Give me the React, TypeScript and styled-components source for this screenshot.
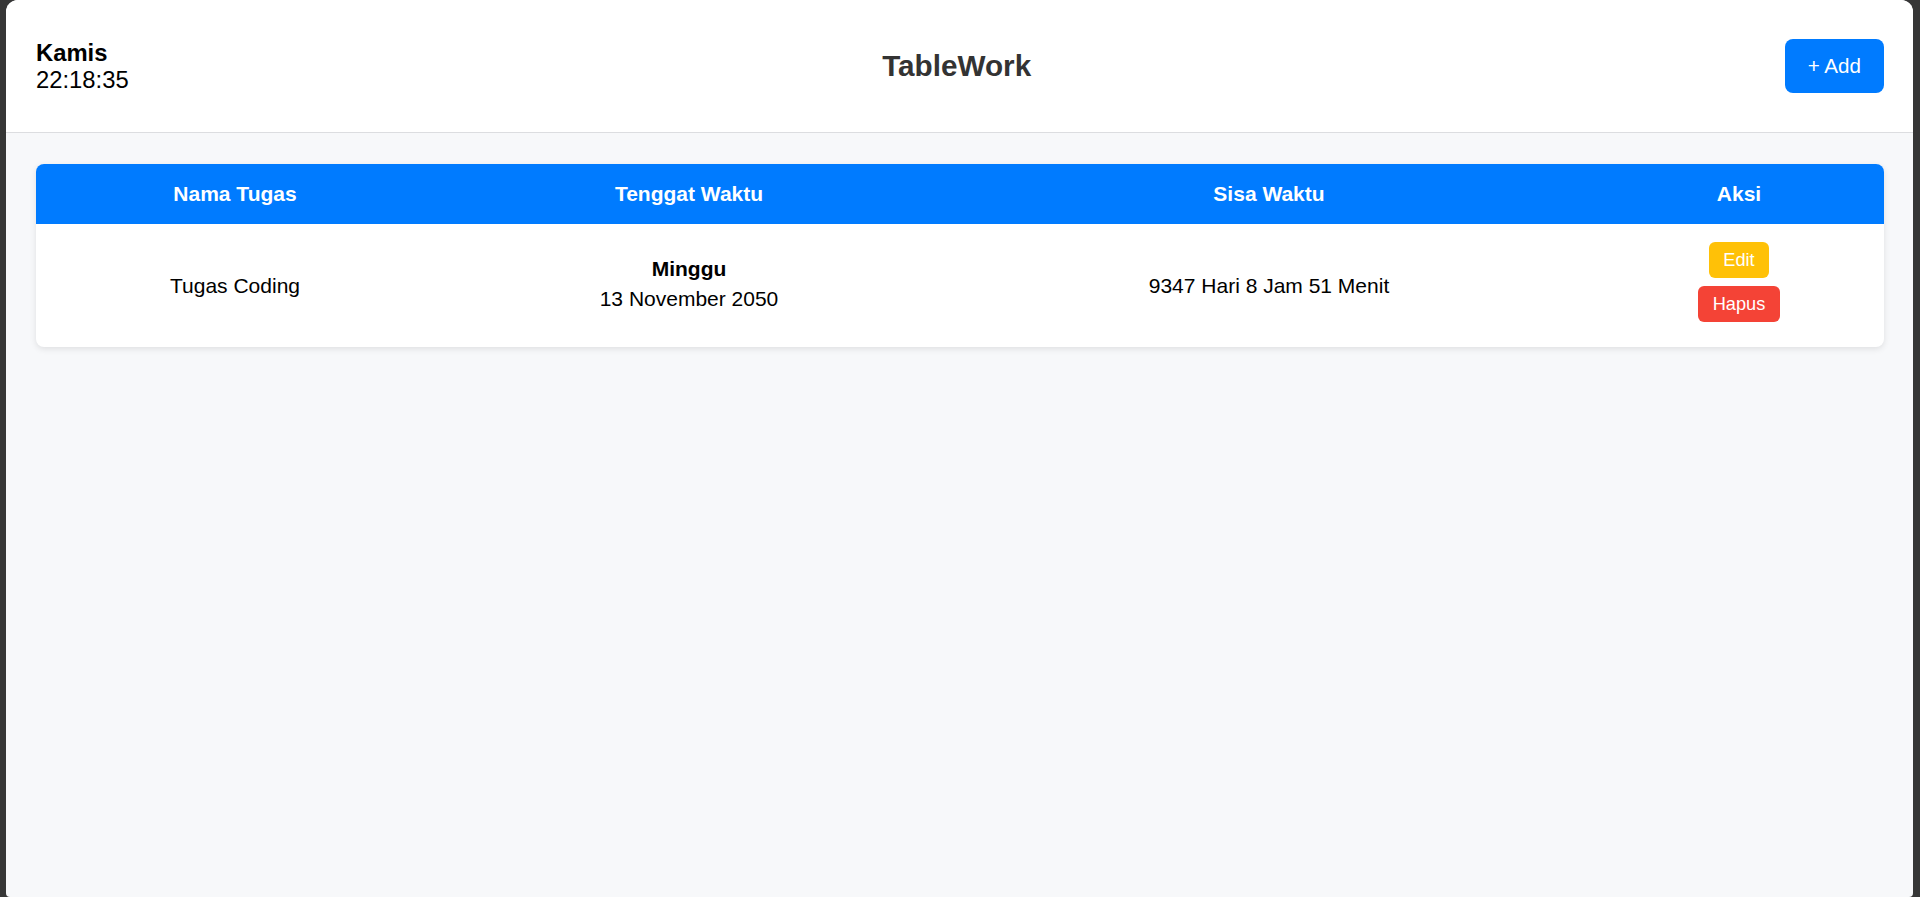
import React from "react";
import styled, { createGlobalStyle } from "styled-components";

const GlobalStyle = createGlobalStyle`
  html, body {
    margin: 0;
    padding: 0;
    background: #363636;
  }
  body {
    font-family: "Liberation Sans", Arial, sans-serif;
  }
  * { box-sizing: border-box; }
`;

const Window = styled.div`
  margin: 0 7px 0 6px;
  height: 897px;
  border-radius: 12px 12px 4px 4px;
  overflow: hidden;
  background: #f7f8fa;
  display: flex;
  flex-direction: column;
`;

const Header = styled.header`
  height: 133px;
  background: #ffffff;
  border-bottom: 1px solid #dcdde0;
  display: flex;
  align-items: center;
  justify-content: space-between;
  padding: 0 29px 0 30px;
`;

const Clock = styled.div`
  font-size: 23.8px;
  line-height: 27.5px;
  color: #000;
`;

const Day = styled.div`
  font-weight: bold;
`;

const Title = styled.h1`
  margin: 0;
  font-size: 29.7px;
  font-weight: bold;
  color: #333333;
`;

const AddButton = styled.button`
  height: 54px;
  padding: 0 23px;
  border: none;
  border-radius: 8px;
  background: #007bff;
  color: #ffffff;
  font-family: inherit;
  font-size: 20.6px;
  cursor: pointer;
`;

const Main = styled.main`
  flex: 1;
  padding: 31px 29px 31px 30px;
`;

const Card = styled.div`
  background: #ffffff;
  border-radius: 8px;
  overflow: hidden;
  box-shadow: 0 2px 6px rgba(0, 0, 0, 0.1);
`;

const Table = styled.table`
  width: 100%;
  border-collapse: collapse;
  table-layout: fixed;
`;

const HeadCell = styled.th`
  height: 60px;
  padding: 0;
  background: #007bff;
  color: #ffffff;
  font-size: 21px;
  font-weight: bold;
  text-align: center;
  vertical-align: middle;
`;

const Cell = styled.td`
  height: 123px;
  padding: 0;
  font-size: 21px;
  color: #000;
  text-align: center;
  vertical-align: middle;
`;

const DateBlock = styled.div`
  line-height: 29.3px;
  margin-top: -4px;
`;

const DayName = styled.div`
  font-weight: bold;
`;

const Actions = styled.div`
  display: flex;
  flex-direction: column;
  align-items: center;
  gap: 8px;
  margin-top: -7px;
`;

const ActionButton = styled.button<{ $bg: string }>`
  height: 36px;
  padding: 0 14.5px;
  border: none;
  border-radius: 6px;
  background: ${(p) => p.$bg};
  color: #ffffff;
  font-family: inherit;
  font-size: 18.2px;
  cursor: pointer;
`;

export default function App() {
  return (
    <>
      <GlobalStyle />
      <Window>
        <Header>
          <Clock>
            <Day>Kamis</Day>
            <div>22:18:35</div>
          </Clock>
          <Title>TableWork</Title>
          <AddButton>+ Add</AddButton>
        </Header>
        <Main>
          <Card>
            <Table>
              <colgroup>
                <col style={{ width: "398px" }} />
                <col style={{ width: "510px" }} />
                <col style={{ width: "650px" }} />
                <col style={{ width: "290px" }} />
              </colgroup>
              <thead>
                <tr>
                  <HeadCell>Nama Tugas</HeadCell>
                  <HeadCell>Tenggat Waktu</HeadCell>
                  <HeadCell>Sisa Waktu</HeadCell>
                  <HeadCell>Aksi</HeadCell>
                </tr>
              </thead>
              <tbody>
                <tr>
                  <Cell>Tugas Coding</Cell>
                  <Cell>
                    <DateBlock>
                      <DayName>Minggu</DayName>
                      <div>13 November 2050</div>
                    </DateBlock>
                  </Cell>
                  <Cell>9347 Hari 8 Jam 51 Menit</Cell>
                  <Cell>
                    <Actions>
                      <ActionButton $bg="#ffc107">Edit</ActionButton>
                      <ActionButton $bg="#f44336">Hapus</ActionButton>
                    </Actions>
                  </Cell>
                </tr>
              </tbody>
            </Table>
          </Card>
        </Main>
      </Window>
    </>
  );
}
